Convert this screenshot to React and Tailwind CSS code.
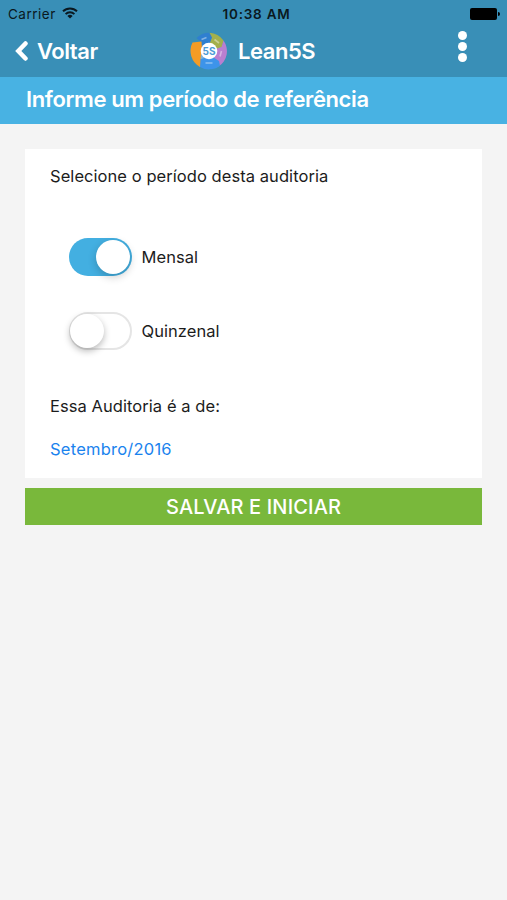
import { useState } from "react";

const Logo = () => (
  <svg width="38" height="38" viewBox="0 0 38 38" className="shrink-0 tracking-normal">
    <circle cx="19" cy="19" r="12" fill="#7fb2d8" />
    <path d="M6.500 6A18.300 18.300 0 0 1 20 .7L22.500 5.500 20 12l-8.500 4.500-1-7Z" fill="#2f7fd0" />
    <path d="M19.500.7A18.300 18.300 0 0 1 33.500 8.500L32 15l-6 2.500L19.500 12 22 5.500Z" fill="#a3b04c" />
    <path d="M33.500 8.500A18.300 18.300 0 0 1 28.500 34.600L23.500 26l2-9 6-2Z" fill="#b97fd0" />
    <path d="M30 33.700a18.300 18.300 0 0 1-21 .7L8.500 28l7-2.500h8L29 29Z" fill="#3d94ea" />
    <path d="M10 34.900A18.300 18.300 0 0 1 2.500 10.500L11.500 9.500 12 17l-1.500 10Z" fill="#f49c25" />
    <g stroke="#fff" strokeOpacity="0.400" strokeWidth="1.600">
      <path d="m11.500 7.500 5-2" />
      <path d="m24.500 7.500 4.500 3.500" />
      <path d="m31.500 19-1.500 5.500" />
      <path d="M15.500 31h7" />
    </g>
    <circle cx="19" cy="19" r="8.300" fill="#fff" />
    <text x="19" y="22.500" textAnchor="middle" fontSize="10" fontWeight="700" fill="#4b9bd6">
      5S
    </text>
  </svg>
);

const StatusBar = () => (
  <div className="grid h-7 grid-cols-3 items-center pl-2 pr-[7px] text-[13.500px] text-[#0a1820]">
    <div className="flex items-center gap-[6px]">
      <span className="tracking-[0.500px]">Carrier</span>
      <svg width="16" height="12" viewBox="0 0 16 12" fill="none" stroke="currentColor" strokeWidth="1.900" className="-mt-0.5">
        <path d="M1 4.300a10 10 0 0 1 14 0" />
        <path d="M3.600 7.100a6.300 6.300 0 0 1 8.800 0" />
        <path d="M8 11.600 5.400 9a3.700 3.700 0 0 1 5.200 0Z" fill="currentColor" stroke="none" />
      </svg>
    </div>
    <span className="whitespace-nowrap pl-[5px] text-center font-semibold tracking-[0.750px]">10:38 AM</span>
    <div className="flex items-center justify-end gap-px">
      <span className="h-[12px] w-[27px] rounded-[2px] bg-black" />
      <span className="h-1 w-[2px] rounded-r-full bg-black" />
    </div>
  </div>
);

const Toggle = ({ label, checked, onChange }) => (
  <div className="flex h-[38px] items-center gap-[10px]">
    <button
      role="switch"
      aria-checked={checked}
      aria-label={label}
      onClick={onChange}
      className={`flex h-[38px] w-[62.500px] items-center rounded-full ${
        checked
          ? "justify-end bg-[#43afe1] pr-[2px]"
          : "border-2 border-[#e5e5e5] bg-white"
      }`}
    >
      <span
        className={`size-[34px] rounded-full bg-white ${
          checked
            ? "shadow-[0_3px_8px_rgba(0,0,0,0.200)]"
            : "-ml-px shadow-[0_3px_7px_rgba(0,0,0,0.280)]"
        }`}
      />
    </button>
    <span>{label}</span>
  </div>
);

export default function App() {
  const [period, setPeriod] = useState("Mensal");

  return (
    <div className="flex min-h-screen flex-col bg-[#f4f4f4] font-['Inter',sans-serif] text-[16.500px] leading-6 tracking-[0.060px] text-[#1c1c1c]">
      <header className="h-[77px] bg-[#398fb7]">
        <StatusBar />
        <div className="flex h-[46px] items-center pl-[15px] pr-[40px] text-[22px] font-semibold tracking-[-0.450px] text-white">
          <button className="flex w-[175px] items-center gap-[9px]">
            <svg width="13" height="20" viewBox="0 0 13 20" fill="none" stroke="currentColor" strokeWidth="4.500" strokeLinecap="round">
              <path d="M10.500 2.500 3.300 10l7.200 7.500" />
            </svg>
            <span>Voltar</span>
          </button>
          <div className="flex flex-1 items-center gap-[10px]">
            <Logo />
            <span>Lean5S</span>
          </div>
          <button aria-label="Menu" className="mb-[10px] flex flex-col gap-[2px]">
            <span className="size-[9px] rounded-full bg-white" />
            <span className="size-[9px] rounded-full bg-white" />
            <span className="size-[9px] rounded-full bg-white" />
          </button>
        </div>
      </header>

      <h1 className="flex h-[47px] items-center bg-[#48b2e3] pb-[3px] pl-[26px] text-[22px] font-semibold tracking-[-0.390px] text-white">
        Informe um período de referência
      </h1>

      <main className="px-[25px] pt-[25px]">
        <section className="h-[329px] bg-white px-[25px] pt-[15px]">
          <p>Selecione o período desta auditoria</p>
          <div className="mt-[50px] flex flex-col gap-[36px] pl-[19px]">
            <Toggle label="Mensal" checked={period === "Mensal"} onChange={() => setPeriod("Mensal")} />
            <Toggle label="Quinzenal" checked={period === "Quinzenal"} onChange={() => setPeriod("Quinzenal")} />
          </div>
          <p className="mt-[44px]">Essa Auditoria é a de:</p>
          <p className="mt-[19px] tracking-[0.230px] text-[#1a83ee]">Setembro/2016</p>
        </section>
        <button className="mt-[10px] h-[37px] w-full bg-[#79b83b] text-[20px] font-medium tracking-[0.150px] text-white">
          SALVAR E INICIAR
        </button>
      </main>
    </div>
  );
}
